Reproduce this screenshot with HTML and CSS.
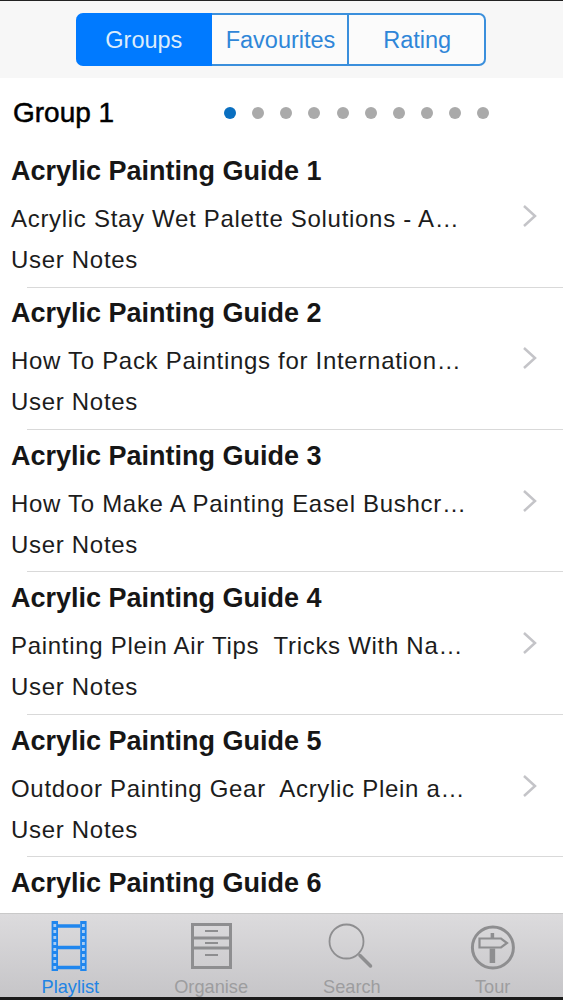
FILE: index.html
```html
<!DOCTYPE html>
<html lang="en">
<head>
<meta charset="utf-8">
<title>Playlist</title>
<link rel="stylesheet" href="styles.css">
</head>
<body>
<div class="app">
  <header class="topbar">
    <div class="segments">
      <div class="seg seg-active">Groups</div>
      <div class="seg">Favourites</div>
      <div class="seg">Rating</div>
    </div>
  </header>
  <div class="group-head">
    <h1 class="group-title">Group 1</h1>
    <div class="dots">
      <i class="dot dot-on"></i><i class="dot"></i><i class="dot"></i><i class="dot"></i><i class="dot"></i><i class="dot"></i><i class="dot"></i><i class="dot"></i><i class="dot"></i><i class="dot"></i>
    </div>
  </div>
  <main class="list">
    <section class="row">
      <div class="row-text"><h2 class="title">Acrylic Painting Guide 1</h2><p class="sub">Acrylic Stay Wet Palette Solutions - A…</p><p class="notes">User Notes</p></div>
      <svg class="chev" viewBox="0 0 16 24"><path d="M2 2l11 10L2 22"/></svg>
    </section>
    <section class="row">
      <div class="row-text"><h2 class="title">Acrylic Painting Guide 2</h2><p class="sub">How To Pack Paintings for Internation…</p><p class="notes">User Notes</p></div>
      <svg class="chev" viewBox="0 0 16 24"><path d="M2 2l11 10L2 22"/></svg>
    </section>
    <section class="row">
      <div class="row-text"><h2 class="title">Acrylic Painting Guide 3</h2><p class="sub">How To Make A Painting Easel Bushcr…</p><p class="notes">User Notes</p></div>
      <svg class="chev" viewBox="0 0 16 24"><path d="M2 2l11 10L2 22"/></svg>
    </section>
    <section class="row">
      <div class="row-text"><h2 class="title">Acrylic Painting Guide 4</h2><p class="sub">Painting Plein Air Tips&nbsp; Tricks With Na…</p><p class="notes">User Notes</p></div>
      <svg class="chev" viewBox="0 0 16 24"><path d="M2 2l11 10L2 22"/></svg>
    </section>
    <section class="row">
      <div class="row-text"><h2 class="title">Acrylic Painting Guide 5</h2><p class="sub">Outdoor Painting Gear&nbsp; Acrylic Plein a…</p><p class="notes">User Notes</p></div>
      <svg class="chev" viewBox="0 0 16 24"><path d="M2 2l11 10L2 22"/></svg>
    </section>
    <section class="row">
      <div class="row-text"><h2 class="title">Acrylic Painting Guide 6</h2></div>
    </section>
  </main>
  <nav class="tabs">
    <div class="tab tab-on">
      <svg class="tab-icon" viewBox="0 0 50 50">
        <path class="s" fill="none" stroke-width="6.400" d="M9.800 0v50M38.400 0v50"/>
        <path class="hole" fill="none" stroke-width="2.800" stroke-dasharray="3 3" d="M9.800 3v45M38.400 3v45"/>
        <path class="s" fill="none" stroke-width="3.500" d="M13 5h22M13 26.500h22M13 46.500h22"/>
      </svg>
      <span>Playlist</span>
    </div>
    <div class="tab">
      <svg class="tab-icon" viewBox="0 0 50 50">
        <path class="s" fill="none" stroke-width="3" d="M6.500 3.500h38v43h-38zM6.500 17h38M6.500 27h38"/>
        <path class="s" fill="none" stroke-width="2" d="M19 10h13M19 22h13M19 34h13"/>
      </svg>
      <span>Organise</span>
    </div>
    <div class="tab">
      <svg class="tab-icon" viewBox="0 0 50 50">
        <circle class="s" fill="none" stroke-width="1.800" cx="19.500" cy="20.500" r="17"/>
        <path class="s" fill="none" stroke-width="3.500" stroke-linecap="round" d="M33 34.500l10.500 10.500"/>
      </svg>
      <span>Search</span>
    </div>
    <div class="tab">
      <svg class="tab-icon" viewBox="0 0 50 50">
        <circle class="s" fill="none" stroke-width="3" cx="24.900" cy="26.500" r="20.500"/>
        <path class="s" fill="none" stroke-width="2.200" d="M11.500 17.500H33L39 22l-6 4.500H11.500z"/>
        <path class="s" fill="none" stroke-width="5.500" d="M24.400 27.500V42"/>
        <path class="s" fill="none" stroke-width="3.500" d="M24.400 12v5"/>
      </svg>
      <span>Tour</span>
    </div>
  </nav>
  <div class="bottom-edge"></div>
</div>
</body>
</html>
```
FILE: styles.css
```css
html, body { margin: 0; padding: 0; }
body { background: #fff; font-family: "Liberation Sans", Arial, sans-serif; color: #111; }
.app { width: 563px; height: 1000px; display: flex; flex-direction: column; overflow: hidden; }
.topbar { flex: 0 0 78px; box-sizing: border-box; background: #f7f7f7; border-top: 1px solid #222; display: flex; justify-content: center; padding: 12px 2px 0 0; }
.segments { width: 410px; height: 53px; display: flex; }
.seg { flex: 1; box-sizing: border-box; display: flex; align-items: center; justify-content: center; font-size: 23.500px; color: #2f86d8; padding: 1px 0 0 2px; border: 2px solid #3a8fdc; border-left: 0; background: #fbfbfb; }
.seg:last-child { border-radius: 0 7px 7px 0; }
.seg-active { background: #007aff; color: #dcecfb; border-color: #007aff; border-radius: 7px 0 0 7px; }
.group-head { flex: 0 0 72px; box-sizing: border-box; display: flex; align-items: center; justify-content: space-between; padding: 0 74px 2px 13px; }
.group-title { margin: 0; font-size: 28px; font-weight: 400; color: #000; -webkit-text-stroke: 0.5px #000; }
.dots { display: flex; gap: 16.100px; }
.dot { width: 12px; height: 12px; border-radius: 50%; background: #aaa; }
.dot-on { background: #0a6fc0; }
.list { flex: 1; min-height: 0; overflow: hidden; }
.row { height: 142.400px; box-sizing: border-box; position: relative; padding-left: 11px; }
.row::after { content: ""; position: absolute; left: 27px; right: 0; top: 136.500px; height: 1px; background: #d9d9d9; }
.row:last-child::after { display: none; }
.row-text { padding-top: 5px; }
.title { margin: 0; font-size: 27px; line-height: 32px; font-weight: 700; color: #161616; }
.sub, .notes { margin: 0; font-size: 24px; color: #1c1c1c; letter-spacing: 0.700px; white-space: pre; }
.sub { line-height: 32px; margin-top: 16px; }
.notes { line-height: 32px; margin-top: 9px; }
.chev { position: absolute; left: 522px; top: 54px; width: 16px; height: 24px; fill: none; stroke: #c4c4c8; stroke-width: 2.500; }
.tabs { flex: 0 0 84px; box-sizing: border-box; display: flex; border-top: 1px solid #c9c9c9; background: linear-gradient(#dcdbdd, #c6c5c8); padding: 7px 0 0 0; }
.tab { flex: 1; display: flex; flex-direction: column; align-items: center; color: #9d9d9f; font-size: 18.200px; line-height: 20px; }
.tab-icon { width: 50px; height: 50px; margin-bottom: 6px; }
.tab .s { stroke: #8e8e90; }
.tab-on { color: #2284e4; }
.tab-on .s { stroke: #1f86ee; }
.hole { stroke: #a9cdf3; }
.bottom-edge { flex: 0 0 3px; background: #1a1a1a; }
```
